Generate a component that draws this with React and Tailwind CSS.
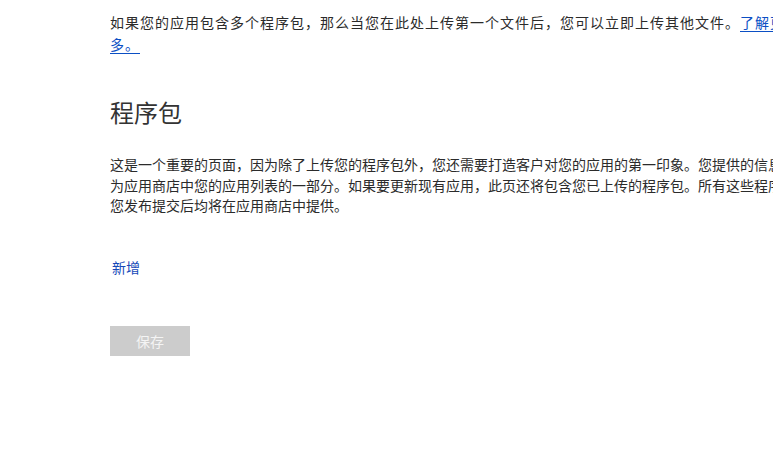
export default function App() {
  const font = { fontFamily: '"Noto Sans CJK SC", "Microsoft YaHei", sans-serif' };
  return (
    <div className="w-[773px] h-[471px] overflow-hidden bg-white text-[#2b2b2b]" style={font}>
      <div className="pl-[110px] pt-[11px] flex flex-col items-start">
        <p className="whitespace-nowrap text-[14px] leading-[22px] tracking-[1px]">
          如果您的应用包含多个程序包，那么当您在此处上传第一个文件后，您可以立即上传其他文件。
          <a href="#" className="text-[#0b4fc4] underline underline-offset-[3px]">了解更<br />多。</a>
        </p>
        <h2 className="mt-[41px] text-[24px] leading-[32px] font-normal text-[#333]">程序包</h2>
        <p className="mt-[26px] whitespace-nowrap text-[14px] leading-[20.5px]">
          这是一个重要的页面，因为除了上传您的程序包外，您还需要打造客户对您的应用的第一印象。您提供的信息将作<br />
          为应用商店中您的应用列表的一部分。如果要更新现有应用，此页还将包含您已上传的程序包。所有这些程序包和信息在<br />
          您发布提交后均将在应用商店中提供。
        </p>
        <a href="#" className="mt-[41px] ml-[2px] text-[14px] leading-[20px] text-[#1549b8]">新增</a>
        <button className="mt-[49px] w-[80px] h-[30px] bg-[#cccccc] text-[#f4f4f4] text-[14px] leading-[30px]">保存</button>
      </div>
    </div>
  );
}
